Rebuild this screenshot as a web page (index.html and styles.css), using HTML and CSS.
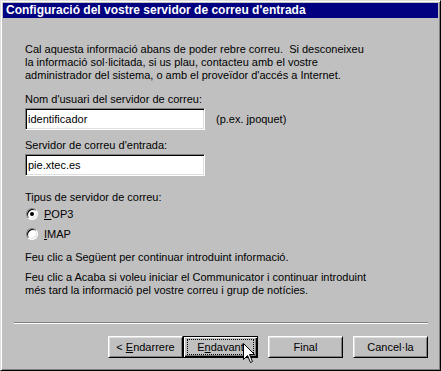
FILE: index.html
```html
<!DOCTYPE html>
<html lang="ca">
  <head>
    <meta charset="UTF-8" />
    <meta name="viewport" content="width=device-width, initial-scale=1.0" />
    <title>Configuració del vostre servidor de correu d'entrada</title>
    <link rel="stylesheet" href="styles.css">
  </head>
  <body>
    <div class="window">
      <div class="titlebar">Configuració del vostre servidor de correu d'entrada</div>

      <div class="content">
        <p class="intro">
          Cal aquesta informació abans de poder rebre correu.&nbsp; Si desconeixeu<br />
          la informació sol·licitada, si us plau, contacteu amb el vostre<br />
          administrador del sistema, o amb el proveïdor d'accés a Internet.
        </p>

        <label class="field-label">Nom d'usuari del servidor de correu:</label>
        <div class="field-row">
          <input class="textbox" type="text" value="identificador" />
          <span class="hint">(p.ex. jpoquet)</span>
        </div>

        <label class="field-label second">Servidor de correu d'entrada:</label>
        <div class="field-row">
          <input class="textbox" type="text" value="pie.xtec.es" />
        </div>

        <div class="field-label third">Tipus de servidor de correu:</div>
        <div class="radio-row">
          <span class="radio checked"></span><span><u>P</u>OP3</span>
        </div>
        <div class="radio-row">
          <span class="radio"></span><span><u>I</u>MAP</span>
        </div>

        <p class="note">Feu clic a Següent per continuar introduint informació.</p>
        <p class="note">Feu clic a Acaba si voleu iniciar el Communicator i continuar introduint<br />
          més tard la informació pel vostre correu i grup de notícies.</p>
      </div>

      <div class="footer">
        <div class="separator"></div>
        <div class="buttons">
          <button class="btn">&lt; <u>E</u>ndarrere</button>
          <button class="btn default"><span class="focus">E<u>n</u>davant</span></button>
          <button class="btn spaced">Final</button>
          <button class="btn spaced">Cancel·la</button>
        </div>
      </div>

      <svg class="cursor" width="12" height="20" viewBox="0 0 12 20">
        <path d="M0.5 0.5 L0.5 16.5 L4.5 12.5 L7.5 19.5 L9.5 18.5 L6.5 11.5 L11.5 11.5 Z" fill="#fff" stroke="#000" stroke-width="1" />
      </svg>
    </div>
  </body>
</html>
```

FILE: styles.css
```css
body {
  margin: 0;
  font-family: "Liberation Sans", Arial, sans-serif;
  font-size: 11px;
  background: #c0c0c0;
}
.window {
  position: relative;
  box-sizing: border-box;
  width: 441px;
  height: 371px;
  padding: 2px;
  background: #c0c0c0;
  border: 1px solid;
  border-color: #dfdfdf #000 #000 #dfdfdf;
  box-shadow: inset 1px 1px #fff, inset -1px -1px #808080;
  display: flex;
  flex-direction: column;
}
.titlebar {
  height: 15px;
  line-height: 15px;
  padding-left: 3px;
  background: #000080;
  color: #fff;
  font-size: 12px;
  font-weight: bold;
  white-space: nowrap;
}
.content {
  flex: 1;
  padding: 25px 0 0 22px;
  line-height: 13px;
}
.intro {
  margin: 0 0 11px;
}
.field-label {
  display: block;
  margin-bottom: 2px;
}
.field-label.second {
  margin-top: 9px;
}
.field-label.third {
  margin-top: 15px;
  margin-bottom: 0;
}
.field-row {
  display: flex;
  align-items: center;
  gap: 11px;
}
.textbox {
  box-sizing: border-box;
  width: 180px;
  height: 22px;
  margin: 0;
  padding: 0 2px;
  font-family: inherit;
  font-size: 11px;
  color: #000;
  background: #fff;
  border: 1px solid;
  border-color: #808080 #fff #fff #808080;
  box-shadow: inset 1px 1px #000, inset -1px -1px #dfdfdf;
  outline: none;
}
.radio-row {
  display: flex;
  align-items: center;
  gap: 6px;
  height: 20px;
  padding-left: 1px;
}
.radio {
  position: relative;
  box-sizing: border-box;
  width: 12px;
  height: 12px;
  border-radius: 50%;
  background: #fff;
  border: 1px solid;
  border-color: #808080 #fff #fff #808080;
  box-shadow: inset 1px 1px #000, inset -1px -1px #dfdfdf;
}
.radio.checked::after {
  content: "";
  position: absolute;
  left: 3px;
  top: 3px;
  width: 4px;
  height: 4px;
  border-radius: 50%;
  background: #000;
}
.note {
  margin: 7px 0 0;
}
.footer {
  padding: 0 10px 10px 11px;
}
.separator {
  height: 1px;
  background: #808080;
  border-bottom: 1px solid #fff;
  margin-bottom: 12px;
}
.buttons {
  display: flex;
  justify-content: flex-end;
}
.btn {
  box-sizing: border-box;
  width: 75px;
  height: 22px;
  padding: 0;
  font-family: inherit;
  font-size: 11px;
  color: #000;
  background: #c0c0c0;
  border: 1px solid;
  border-color: #fff #000 #000 #fff;
  box-shadow: inset 1px 1px #dfdfdf, inset -1px -1px #808080;
}
.btn.default {
  border-color: #000;
  box-shadow: inset 1px 1px #fff, inset -1px -1px #000, inset -2px -2px #808080;
}
.btn.spaced {
  margin-left: 10px;
}
.focus {
  display: block;
  margin: 0 3px;
  line-height: 14px;
  border: 1px dotted #000;
}
.cursor {
  position: absolute;
  left: 242px;
  top: 342px;
}
```
